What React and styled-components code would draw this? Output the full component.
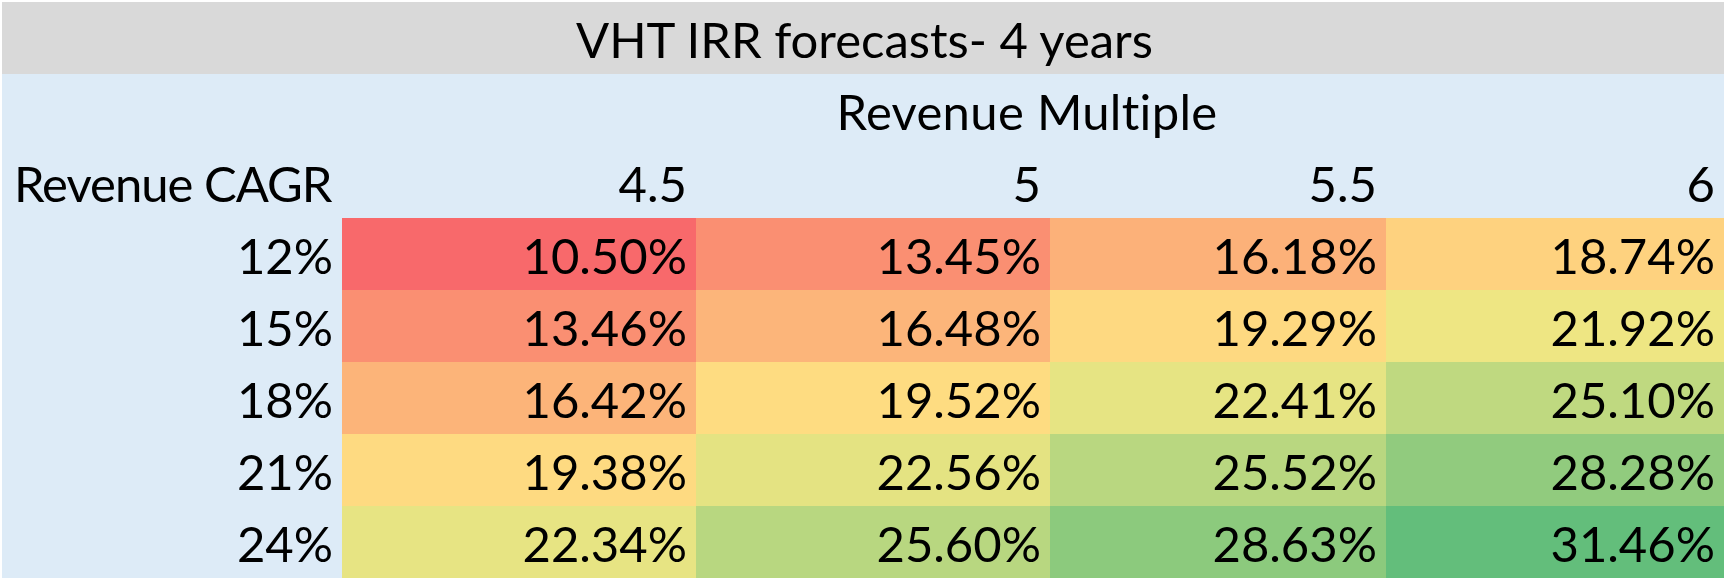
import { Fragment } from 'react'
import styled, { createGlobalStyle } from 'styled-components'

const GlobalStyle = createGlobalStyle`
  html, body {
    margin: 0;
    padding: 0;
    background: #ffffff;
  }
  body {
    font-family: Lato, "Open Sans", sans-serif;
    color: #000000;
  }
`

const Sheet = styled.div`
  padding: 2px 0 0 2px;
  width: 1728px;
  height: 582px;
  box-sizing: border-box;
`

const Grid = styled.div`
  display: grid;
  grid-template-columns: 340px 354px 354px 336px 338px;
  grid-auto-rows: 72px;
  background: #ddebf7;
  width: 1722px;
`

const Cell = styled.div`
  font-size: 49px;
  line-height: 72px;
  padding: 1px 9px 0 12px;
  white-space: nowrap;
  overflow: hidden;
  text-align: ${props => props.$align || 'right'};
  background: ${props => props.$bg || '#ddebf7'};
  grid-column: ${props => props.$span || 'auto'};
  letter-spacing: ${props => props.$tight ? '-1px' : 'normal'};
`

const Title = styled(Cell)`
  background: #d9d9d9;
  grid-column: 1 / -1;
  text-align: center;
`

const SubTitle = styled(Cell)`
  grid-column: 2 / -1;
  text-align: center;
  padding-right: 24px;
  letter-spacing: 0.3px;
`

const multiples = ['4.5', '5', '5.5', '6']

const rows = [
  { cagr: '12%', irr: [10.5, 13.45, 16.18, 18.74] },
  { cagr: '15%', irr: [13.46, 16.48, 19.29, 21.92] },
  { cagr: '18%', irr: [16.42, 19.52, 22.41, 25.1] },
  { cagr: '21%', irr: [19.38, 22.56, 25.52, 28.28] },
  { cagr: '24%', irr: [22.34, 25.6, 28.63, 31.46] },
]

// excel style 3-colour scale: min red, 50th percentile yellow, max green
const all = rows.flatMap(r => r.irr).sort((a, b) => a - b)
const min = all[0]
const max = all[all.length - 1]
const pos = (all.length - 1) * 0.5
const mid = all[Math.floor(pos)] + (all[Math.ceil(pos)] - all[Math.floor(pos)]) * (pos - Math.floor(pos))

const red = [248, 105, 107]
const yellow = [255, 235, 132]
const green = [99, 190, 123]

function mix(a, b, t) {
  return `rgb(${a.map((c, i) => Math.round(c + (b[i] - c) * t)).join(',')})`
}

function scaleColor(v) {
  if (v <= mid) return mix(red, yellow, (v - min) / (mid - min))
  return mix(yellow, green, (v - mid) / (max - mid))
}

const App = () => {
  return (
    <Sheet>
      <GlobalStyle />
      <Grid>
        <Title>VHT IRR forecasts- 4 years</Title>
        <Cell />
        <SubTitle>Revenue Multiple</SubTitle>
        <Cell $align="left" $tight>Revenue CAGR</Cell>
        {multiples.map(m => (
          <Cell key={m}>{m}</Cell>
        ))}
        {rows.map(row => (
          <Fragment key={row.cagr}>
            <Cell>{row.cagr}</Cell>
            {row.irr.map(v => (
              <Cell key={v} $bg={scaleColor(v)}>{v.toFixed(2)}%</Cell>
            ))}
          </Fragment>
        ))}
      </Grid>
    </Sheet>
  )
}

export default App
